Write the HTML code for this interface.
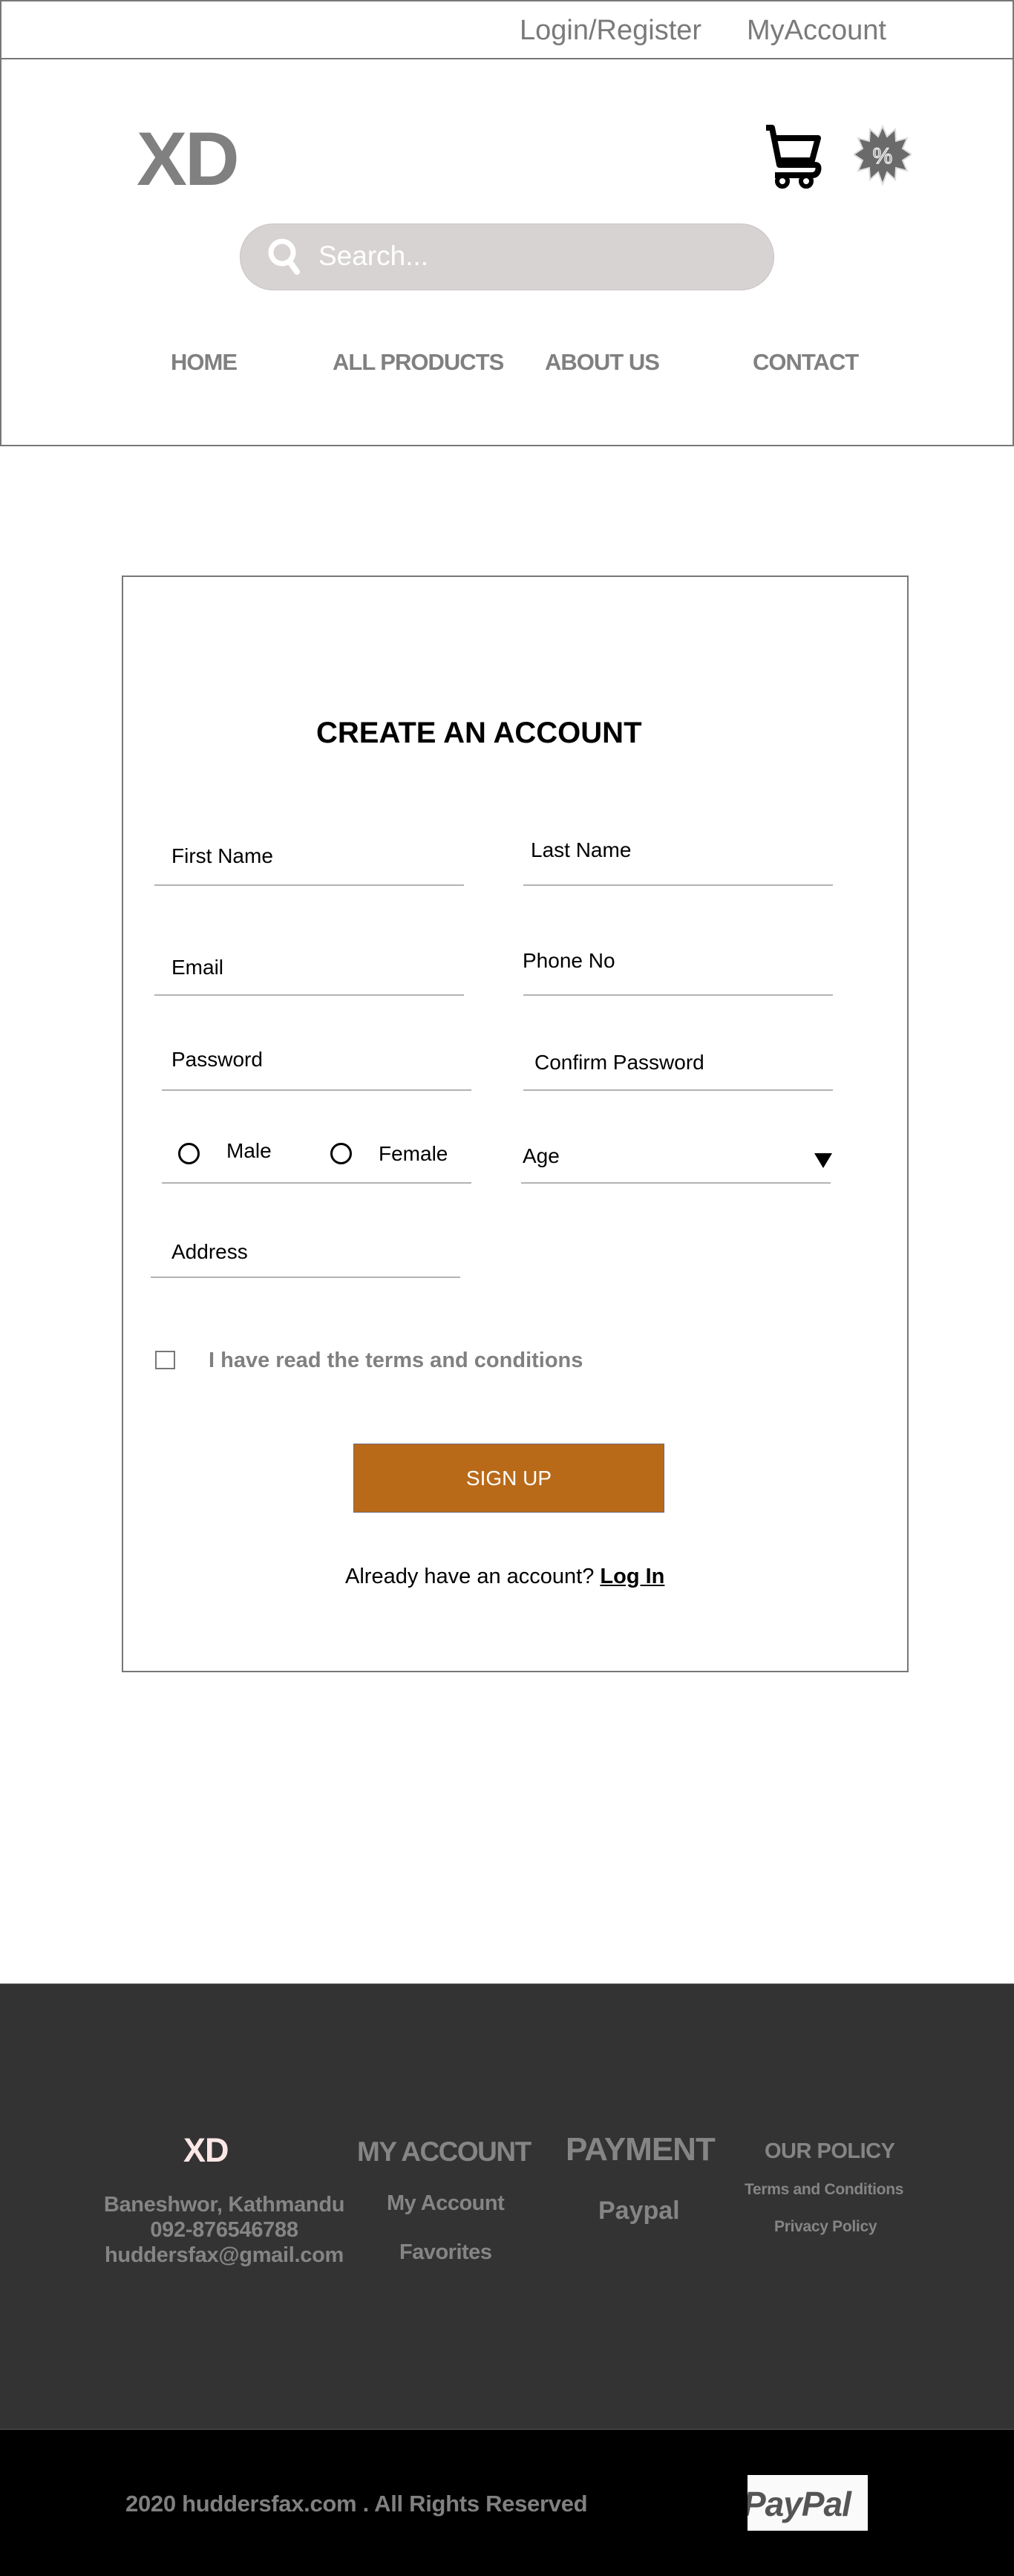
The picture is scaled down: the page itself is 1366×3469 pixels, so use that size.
<!DOCTYPE html>
<html><head><meta charset="utf-8"><style>
*{margin:0;padding:0;box-sizing:border-box}
body{width:1366px;height:3469px;position:relative;background:#fff;font-family:"Liberation Sans",sans-serif;overflow:hidden}
.a{position:absolute;white-space:nowrap}
.hdr{position:absolute;left:0;top:0;width:1366px;height:601px;border:2px solid #777}
.line{position:absolute;height:2px;background:#b3b3b3}
.lbl{position:absolute;font-size:28px;color:#000;line-height:1;white-space:nowrap}
.nav{position:absolute;top:470px;font-size:31px;font-weight:bold;color:#808080;letter-spacing:-1px}
.fg{color:#858585;font-weight:bold;position:absolute;white-space:nowrap;text-align:center}
</style></head><body>
<div class="hdr"></div>
<div class="a" style="left:0;top:78px;width:1366px;height:2px;background:#777"></div>
<div class="a" style="left:700px;top:20px;font-size:38px;color:#7a7a7a">Login/Register</div>
<div class="a" style="left:1006px;top:20px;font-size:38px;color:#7a7a7a">MyAccount</div>
<div class="a" style="left:184px;top:156px;font-size:102px;font-weight:bold;color:#808080;letter-spacing:-3px">XD</div>
<svg class="a" style="left:1028px;top:166px" width="80" height="88" viewBox="0 0 80 88">
<path d="M4 6 H12 L22 56 H70 Q76 56 74 64 Q72 70 66 70 H16" fill="none" stroke="#000" stroke-width="8" stroke-linejoin="round"/>
<path d="M14 20 H74 L66 50 H22" fill="none" stroke="#000" stroke-width="8" stroke-linejoin="round"/>
<circle cx="26" cy="78" r="7" fill="none" stroke="#000" stroke-width="6"/>
<circle cx="58" cy="78" r="7" fill="none" stroke="#000" stroke-width="6"/>
</svg>
<svg class="a" style="left:1150px;top:166px" width="78" height="90" viewBox="0 0 78 90">
<polygon points="39,4 45,18 56,8 57,24 72,20 66,34 78,42 66,50 72,64 57,60 56,76 45,66 39,82 33,66 22,76 21,60 6,64 12,50 0,42 12,34 6,20 21,24 22,8 33,18" fill="#6a6a6a" stroke="#ddd" stroke-width="2"/>
<text x="39" y="54" text-anchor="middle" font-family="Liberation Sans" font-size="30" fill="#6a6a6a" stroke="#fff" stroke-width="1.2">%</text>
</svg>
<div class="a" style="left:323px;top:301px;width:720px;height:90px;border-radius:45px;background:#d7d3d2;border:1px solid #c8c4c3"></div>
<svg class="a" style="left:360px;top:318px" width="48" height="54" viewBox="0 0 48 54"><circle cx="20" cy="22" r="15" fill="none" stroke="#fff" stroke-width="7"/><path d="M30 34 L40 48" stroke="#fff" stroke-width="8" stroke-linecap="round"/></svg>
<div class="a" style="left:429px;top:324px;font-size:37px;color:#fff">Search...</div>
<div class="nav" style="left:230px">HOME</div>
<div class="nav" style="left:448px">ALL PRODUCTS</div>
<div class="nav" style="left:734px">ABOUT US</div>
<div class="nav" style="left:1014px">CONTACT</div>

<div class="a" style="left:164px;top:775px;width:1060px;height:1477px;border:2px solid #777"></div>
<div class="a" style="left:426px;top:965px;font-size:40px;font-weight:bold;color:#000">CREATE AN ACCOUNT</div>
<div class="lbl" style="left:231px;top:1139px">First Name</div>
<div class="lbl" style="left:715px;top:1131px">Last Name</div>
<div class="line" style="left:208px;top:1191px;width:417px"></div>
<div class="line" style="left:705px;top:1191px;width:417px"></div>
<div class="lbl" style="left:231px;top:1289px">Email</div>
<div class="lbl" style="left:704px;top:1280px">Phone No</div>
<div class="line" style="left:208px;top:1339px;width:417px"></div>
<div class="line" style="left:705px;top:1339px;width:417px"></div>
<div class="lbl" style="left:231px;top:1413px">Password</div>
<div class="lbl" style="left:720px;top:1417px">Confirm Password</div>
<div class="line" style="left:218px;top:1467px;width:417px"></div>
<div class="line" style="left:705px;top:1467px;width:417px"></div>
<div class="a" style="left:240px;top:1539px;width:29px;height:29px;border:3px solid #000;border-radius:50%"></div>
<div class="lbl" style="left:305px;top:1536px">Male</div>
<div class="a" style="left:445px;top:1539px;width:29px;height:29px;border:3px solid #000;border-radius:50%"></div>
<div class="lbl" style="left:510px;top:1540px">Female</div>
<div class="lbl" style="left:704px;top:1543px">Age</div>
<svg class="a" style="left:1097px;top:1553px" width="24" height="20"><polygon points="0,0 24,0 12,20" fill="#000"/></svg>
<div class="line" style="left:218px;top:1592px;width:417px"></div>
<div class="line" style="left:702px;top:1592px;width:417px"></div>
<div class="lbl" style="left:231px;top:1672px">Address</div>
<div class="line" style="left:203px;top:1719px;width:417px"></div>
<div class="a" style="left:209px;top:1819px;width:27px;height:25px;border:2px solid #777"></div>
<div class="a" style="left:281px;top:1816px;font-size:29px;font-weight:bold;color:#808080">I have read the terms and conditions</div>
<div class="a" style="left:476px;top:1944px;width:419px;height:93px;background:#b96a19;border:1px solid #6a6a80;color:#fff;font-size:28px;text-align:center;line-height:91px">SIGN UP</div>
<div class="a" style="left:465px;top:2107px;font-size:29px;color:#000">Already have an account? <b style="text-decoration:underline">Log In</b></div>

<div class="a" style="left:0;top:2671px;width:1366px;height:601px;background:#333;border-top:1px solid #666"></div>
<div class="a" style="left:0;top:3271px;width:1366px;height:198px;background:#000;border-top:1px solid #555"></div>
<div class="fg" style="left:247px;top:2870px;font-size:45px;color:#fde6e6;letter-spacing:-1px">XD</div>
<div class="fg" style="left:481px;top:2877px;font-size:37px;letter-spacing:-1.5px">MY ACCOUNT</div>
<div class="fg" style="left:762px;top:2870px;font-size:44px;letter-spacing:-1px">PAYMENT</div>
<div class="fg" style="left:1030px;top:2881px;font-size:29px;letter-spacing:-0.5px">OUR POLICY</div>
<div class="fg" style="left:132px;top:2952px;width:340px;font-size:29px;line-height:34px;letter-spacing:-0.3px">Baneshwor, Kathmandu<br>092-876546788<br>huddersfax@gmail.com</div>
<div class="fg" style="left:521px;top:2951px;font-size:29px;letter-spacing:-0.5px">My Account</div>
<div class="fg" style="left:538px;top:3017px;font-size:29px;letter-spacing:-0.5px">Favorites</div>
<div class="fg" style="left:806px;top:2958px;font-size:34px">Paypal</div>
<div class="fg" style="left:1003px;top:2937px;font-size:21px;letter-spacing:-0.3px">Terms and Conditions</div>
<div class="fg" style="left:1043px;top:2987px;font-size:21px;letter-spacing:-0.3px">Privacy Policy</div>
<div class="fg" style="left:169px;top:3354px;font-size:31px;color:#808080;letter-spacing:-0.3px">2020 huddersfax.com . All Rights Reserved</div>
<div class="a" style="left:1007px;top:3333px;width:162px;height:75px;background:#fafafa;overflow:hidden">
<div style="position:absolute;left:-6px;top:12px;font-size:46px;font-weight:bold;font-style:italic;color:#555;letter-spacing:-1px">PayPal</div></div>
</body></html>
